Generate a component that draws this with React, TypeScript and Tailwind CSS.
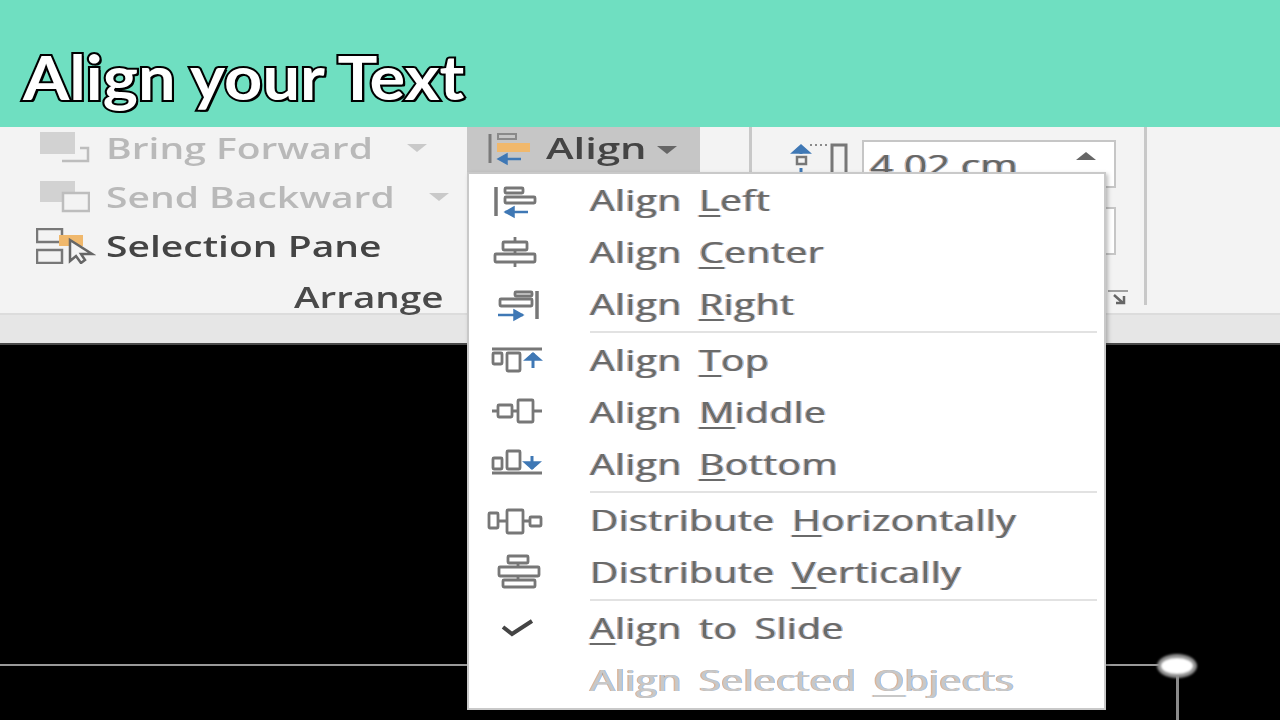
import { ReactNode } from 'react';

const BLUE = '#3f78b5';
const GRAY = '#777777';

// all menu glyphs share a 60x40 box
function MenuIcon({ children }: { children?: ReactNode }) {
  return (
    <svg width="60" height="40" viewBox="0 0 60 40" fill="none" stroke={GRAY} strokeWidth="2.8" className="blur-[0.7px]">
      {children}
    </svg>
  );
}

function ArrowH({ y, from, to }: { y: number; from: number; to: number }) {
  const d = to > from ? -1 : 1;
  return (
    <g stroke={BLUE} strokeWidth="2.5">
      <path d={`M${from} ${y}H${to}`} />
      <path d={`M${to + d * 9} ${y - 5}L${to} ${y}L${to + d * 9} ${y + 5}Z`} fill={BLUE} strokeWidth="1.5" />
    </g>
  );
}

function ArrowV({ x, from, to }: { x: number; from: number; to: number }) {
  const d = to > from ? -1 : 1;
  return (
    <g stroke={BLUE} strokeWidth="3">
      <path d={`M${x} ${from}V${to}`} />
      <path d={`M${x - 8} ${to + d * 7}L${x} ${to}L${x + 8} ${to + d * 7}Z`} fill={BLUE} strokeWidth="1.5" />
    </g>
  );
}

const icons: Record<string, ReactNode> = {
  left: (
    <>
      <path d="M9 7V36" strokeWidth="3.5" />
      <rect x="18" y="8" width="18" height="5" rx="1" />
      <rect x="18" y="17" width="30" height="6" rx="1" />
      <ArrowH y={32} from={41} to={18} />
    </>
  ),
  center: (
    <>
      <path d="M28 5V10M28 18V22M28 30V35" />
      <rect x="16" y="10" width="24" height="8" rx="1" />
      <rect x="8" y="22" width="40" height="8" rx="1" />
    </>
  ),
  right: (
    <>
      <path d="M50 7V35" strokeWidth="3.5" />
      <rect x="28" y="8" width="17" height="4" rx="1" />
      <rect x="13" y="15" width="32" height="7" rx="1" />
      <ArrowH y={31} from={11} to={36} />
    </>
  ),
  top: (
    <>
      <path d="M5 9H55" />
      <rect x="6" y="13" width="9" height="11" rx="1" />
      <rect x="20" y="13" width="13" height="18" rx="1" />
      <ArrowV x={46} from={28} to={13} />
    </>
  ),
  middle: (
    <>
      <path d="M5 19H11M25 19H31M46 19H55" />
      <rect x="11" y="13" width="14" height="12" rx="1" />
      <rect x="31" y="8" width="15" height="22" rx="1" />
    </>
  ),
  bottom: (
    <>
      <path d="M5 29H55" />
      <rect x="6" y="14" width="9" height="11" rx="1" />
      <rect x="20" y="7" width="13" height="18" rx="1" />
      <ArrowV x={45} from={12} to={25} />
    </>
  ),
  distH: (
    <>
      <path d="M11 21H20M36 21H43" />
      <rect x="2" y="13" width="9" height="15" rx="1" />
      <rect x="20" y="10" width="16" height="23" rx="1" />
      <rect x="43" y="17" width="11" height="9" rx="1" />
    </>
  ),
  distV: (
    <>
      <path d="M31 11V15M31 24V28" />
      <rect x="21" y="4" width="20" height="7" rx="1" />
      <rect x="12" y="15" width="40" height="9" rx="1" />
      <rect x="16" y="28" width="32" height="7" rx="1" />
    </>
  ),
  check: <path d="M16 19L25 26L45 13" stroke="#444444" strokeWidth="4" />,
};

const textFringe = '[text-shadow:-1px_0_0_rgba(190,120,70,0.55),1px_0_0_rgba(70,140,220,0.5)]';

function MenuItem({ icon, pre, hot, post, disabled }: { icon?: string; pre: string; hot: string; post: string; disabled?: boolean }) {
  return (
    <div className="flex h-[52px] items-center">
      <div className="ml-[18px] w-[103px] shrink-0">
        <MenuIcon>{icon ? icons[icon] : null}</MenuIcon>
      </div>
      <span
        className={`origin-left scale-x-[1.35] whitespace-pre text-[29px] font-medium tracking-[0.3px] underline-offset-[4px] [word-spacing:5px] blur-[0.5px] ${textFringe} ${
          disabled ? 'text-[#c8c8c8]' : 'text-[#6a6a6a]'
        }`}
      >
        {pre}
        <span className="underline">{hot}</span>
        {post}
      </span>
    </div>
  );
}

function MenuSeparator() {
  return (
    <div className="flex h-[4px] items-center pl-[121px] pr-[7px]">
      <div className="h-[2px] w-full bg-[#e2e2e2]" />
    </div>
  );
}

function Caret({ color, up }: { color: string; up?: boolean }) {
  return (
    <svg width="20" height="8" viewBox="0 0 20 8" className="blur-[0.5px]">
      <path d={up ? 'M0 8H20L10 0Z' : 'M0 0H20L10 8Z'} fill={color} />
    </svg>
  );
}

function BringForwardIcon() {
  return (
    <svg width="54" height="32" viewBox="0 0 54 32" fill="none" className="blur-[0.6px]">
      <rect x="4" y="0" width="35" height="22" fill="#d2d2d2" />
      <path d="M26 29H52V16H44" stroke="#bdbdbd" strokeWidth="2.5" />
    </svg>
  );
}

function SendBackwardIcon() {
  return (
    <svg width="54" height="32" viewBox="0 0 54 32" fill="none" className="blur-[0.6px]">
      <rect x="4" y="0" width="35" height="21" fill="#d2d2d2" />
      <rect x="27" y="12" width="26" height="18" fill="#f3f3f3" stroke="#bdbdbd" strokeWidth="2.5" />
    </svg>
  );
}

function SelectionPaneIcon() {
  return (
    <svg width="60" height="36" viewBox="0 0 60 36" fill="none" className="blur-[0.6px]">
      <rect x="1" y="1" width="25" height="13" stroke="#777777" strokeWidth="2.5" />
      <rect x="1" y="22" width="25" height="13" stroke="#777777" strokeWidth="2.5" />
      <path d="M23 7H47V18H23Z" fill="#f0b86c" />
      <path d="M34 12V33L40 28L45 35L49 32L45 26H56Z" fill="#f3f3f3" stroke="#666666" strokeWidth="2.5" />
    </svg>
  );
}

function AlignButtonIcon() {
  return (
    <svg width="44" height="34" viewBox="0 0 44 34" fill="none" className="blur-[0.6px]">
      <path d="M3 1V30" stroke="#7a7a7a" strokeWidth="3" />
      <rect x="11" y="1" width="18" height="5" stroke="#8a8a8a" strokeWidth="2" />
      <rect x="10" y="10" width="33" height="9" fill="#f0b86c" />
      <path d="M16 26H34" stroke={BLUE} strokeWidth="2.5" />
      <path d="M20 21L11 26L20 31Z" fill={BLUE} stroke={BLUE} strokeWidth="1.5" />
    </svg>
  );
}

function SizeIcon() {
  return (
    <svg width="60" height="36" viewBox="0 0 60 36" fill="none" className="blur-[0.6px]">
      <path d="M13 14V8" stroke={BLUE} strokeWidth="3" />
      <path d="M4 13L13 5L22 13Z" fill={BLUE} stroke={BLUE} strokeWidth="1.5" />
      <rect x="9" y="17" width="9" height="7" fill="#f3f3f3" stroke="#777777" strokeWidth="2.5" />
      <path d="M13 28V34" stroke={BLUE} strokeWidth="3" />
      <path d="M22 5H40" stroke="#8a8a8a" strokeWidth="2" strokeDasharray="2 3" />
      <path d="M44 36V5H58V36" stroke="#777777" strokeWidth="3" />
    </svg>
  );
}

function RibbonRow({ icon, label, caretGap, disabled }: { icon: ReactNode; label: string; caretGap?: string; disabled?: boolean }) {
  return (
    <div className="flex h-[49px] items-center">
      <div className="w-[70px] shrink-0 pl-[36px]">{icon}</div>
      <span
        className={`ml-[36px] origin-left scale-x-[1.345] whitespace-pre text-[29px] font-semibold blur-[0.5px] ${
          disabled ? 'text-[#b9b9b9]' : 'text-[#444444]'
        }`}
      >
        {label}
      </span>
      {caretGap && (
        <span className={caretGap}>
          <Caret color="#c9c9c9" />
        </span>
      )}
    </div>
  );
}

export default function App() {
  return (
    <div className="relative h-[720px] w-[1280px] overflow-hidden bg-black font-['Open_Sans',sans-serif]">
      {/* title band */}
      <div className="flex h-[127px] items-end bg-[#6fdfc1] pb-[9px] pl-[23px]">
        <h1 className="origin-left scale-x-[1.075] font-['Lato',sans-serif] text-[62px] font-bold leading-[84px] text-white [paint-order:stroke_fill] [-webkit-text-stroke:4px_#000000] [text-shadow:2px_2px_0_#000000]">
          Align your Text
        </h1>
      </div>

      {/* ribbon */}
      <div className="flex h-[188px] border-b-2 border-[#dcdcdc] bg-[#f3f3f3]">
        <div className="flex w-[467px] shrink-0 flex-col">
          <div className="mt-[-4px]">
            <RibbonRow icon={<BringForwardIcon />} label="Bring Forward" caretGap="ml-[103px]" disabled />
            <RibbonRow icon={<SendBackwardIcon />} label="Send Backward" caretGap="ml-[108px]" disabled />
            <RibbonRow icon={<SelectionPaneIcon />} label="Selection Pane" />
          </div>
          <div className="mt-[8px] origin-right scale-x-[1.38] pr-[17px] text-right text-[28px] font-semibold leading-[38px] text-[#4a4a4a] blur-[0.5px]">
            Arrange
          </div>
        </div>

        <div className="flex h-[45px] w-[233px] shrink-0 items-center bg-[#c6c6c6] pl-[20px]">
          <AlignButtonIcon />
          <span className="ml-[15px] mt-[-3px] origin-left scale-x-[1.44] text-[29px] font-semibold text-[#444444] blur-[0.5px]">Align</span>
          <span className="ml-[41px]">
            <Caret color="#666666" />
          </span>
        </div>

        <div className="ml-[49px] h-[178px] w-[3px] bg-[#c8c8c8]" />

        <div className="flex w-[392px] shrink-0 pl-[36px] pt-[13px]">
          <div className="w-[74px] shrink-0">
            <SizeIcon />
          </div>
          <div className="flex w-[254px] shrink-0 flex-col gap-[19px]">
            <div className="flex h-[48px] items-start justify-between border-2 border-[#c6c6c6] bg-white pl-[6px] pr-[18px]">
              <span className={`mt-[3px] origin-left scale-x-[1.4] text-[29px] leading-[40px] text-[#666666] blur-[0.4px] ${textFringe}`}>4.02 cm</span>
              <span className="mt-[10px]">
                <Caret color="#666666" up />
              </span>
            </div>
            <div className="h-[48px] border-2 border-[#c6c6c6] bg-white" />
          </div>
        </div>

        <div className="h-[178px] w-[3px] bg-[#c8c8c8]" />
      </div>

      {/* status strip above the slide */}
      <div className="h-[30px] border-b-2 border-[#4a4a4a] bg-[#e6e6e6]" />

      {/* slide canvas */}
      <div className="absolute left-0 top-[664px] h-[2px] w-[1160px] bg-[#9a9a9a]" />
      <div className="absolute left-[1176px] top-[676px] h-[44px] w-[3px] bg-[#8a8a8a]" />
      <div className="absolute left-[1157px] top-[654px] h-[24px] w-[40px] rounded-[50%] border-4 border-[#8f8f8f] bg-white blur-[1px]" />

      <svg className="absolute left-[1108px] top-[290px] blur-[0.4px]" width="22" height="16" viewBox="0 0 22 16" fill="none">
        <path d="M0 1H20" stroke="#a0a0a0" strokeWidth="2" />
        <path d="M6 5L15 13M8 13H16V6" stroke="#666666" strokeWidth="2.5" />
      </svg>

      {/* align dropdown */}
      <div className="absolute left-[467px] top-[172px] h-[538px] w-[639px] border-2 border-[#c9c9c9] bg-white shadow-[2px_2px_4px_rgba(0,0,0,0.25)]">
        <MenuItem icon="left" pre="Align " hot="L" post="eft" />
        <MenuItem icon="center" pre="Align " hot="C" post="enter" />
        <MenuItem icon="right" pre="Align " hot="R" post="ight" />
        <MenuSeparator />
        <MenuItem icon="top" pre="Align " hot="T" post="op" />
        <MenuItem icon="middle" pre="Align " hot="M" post="iddle" />
        <MenuItem icon="bottom" pre="Align " hot="B" post="ottom" />
        <MenuSeparator />
        <MenuItem icon="distH" pre="Distribute " hot="H" post="orizontally" />
        <MenuItem icon="distV" pre="Distribute " hot="V" post="ertically" />
        <MenuSeparator />
        <MenuItem icon="check" pre="" hot="A" post="lign to Slide" />
        <MenuItem pre="Align Selected " hot="O" post="bjects" disabled />
      </div>
    </div>
  );
}
